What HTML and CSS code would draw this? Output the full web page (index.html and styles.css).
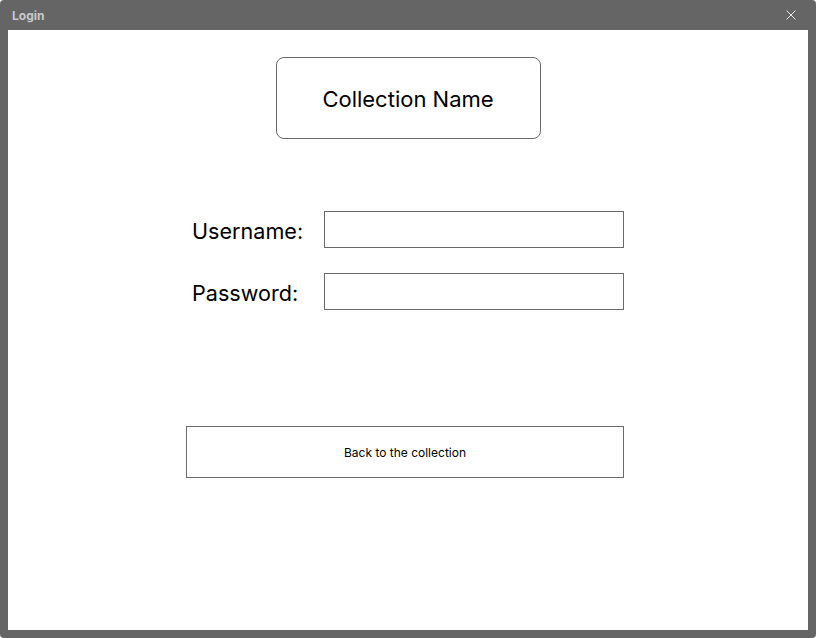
FILE: index.html
```html
<!DOCTYPE html>
<html>
<head>
<meta charset="utf-8">
<link rel="stylesheet" href="styles.css">
</head>
<body>
<div class="window">
  <div class="titlebar">
    <span class="title">Login</span>
    <svg class="close" width="10" height="10" viewBox="0 0 10 10"><path d="M0.5 0.5L9.5 9.5M9.5 0.5L0.5 9.5" stroke="#e6e6e6" stroke-width="1" fill="none"/></svg>
  </div>
  <div class="content">
    <div class="collection">Collection Name</div>
    <div class="form">
      <div class="row"><label class="label">Username:</label><div class="input"></div></div>
      <div class="row"><label class="label">Password:</label><div class="input"></div></div>
    </div>
    <div class="back">Back to the collection</div>
  </div>
</div>
</body>
</html>
```
FILE: styles.css
```css
html, body { margin: 0; padding: 0; }
body { background: #fff; font-family: Inter, "Liberation Sans", Arial, sans-serif; }
.window {
  width: 816px; height: 638px; box-sizing: border-box;
  background: #656565; border-radius: 4px;
  display: flex; flex-direction: column;
  padding: 0 8px 8px 8px;
}
.titlebar {
  height: 30px; display: flex; align-items: center; justify-content: space-between;
  padding: 0 12px 0 4px;
}
.title { color: #c8c8c8; font-weight: bold; font-size: 12px; margin-top: 0; }
.close { margin-top: -1px; }
.content {
  flex: 1; background: #fff; display: flex; flex-direction: column; align-items: center;
  padding-top: 27px;
}
.collection {
  width: 265px; height: 82px; box-sizing: border-box;
  border: 1px solid #6a6a6a; border-radius: 8px;
  display: flex; align-items: center; justify-content: center;
  font-size: 22px; color: #000; padding-top: 1px;
}
.form { margin-top: 72px; display: flex; flex-direction: column; gap: 25px; width: 432px; }
.row { display: flex; align-items: center; }
.label { width: 132px; font-size: 21.6px; color: #000; padding-top: 2px; }
.input { width: 300px; height: 37px; box-sizing: border-box; border: 1px solid #6a6a6a; }
.back {
  margin-top: 116px; margin-left: -6px;
  width: 438px; height: 52px; box-sizing: border-box;
  border: 1px solid #6a6a6a; display: flex; align-items: center; justify-content: center;
  font-size: 12px; color: #000; padding-top: 1px;
}
```
